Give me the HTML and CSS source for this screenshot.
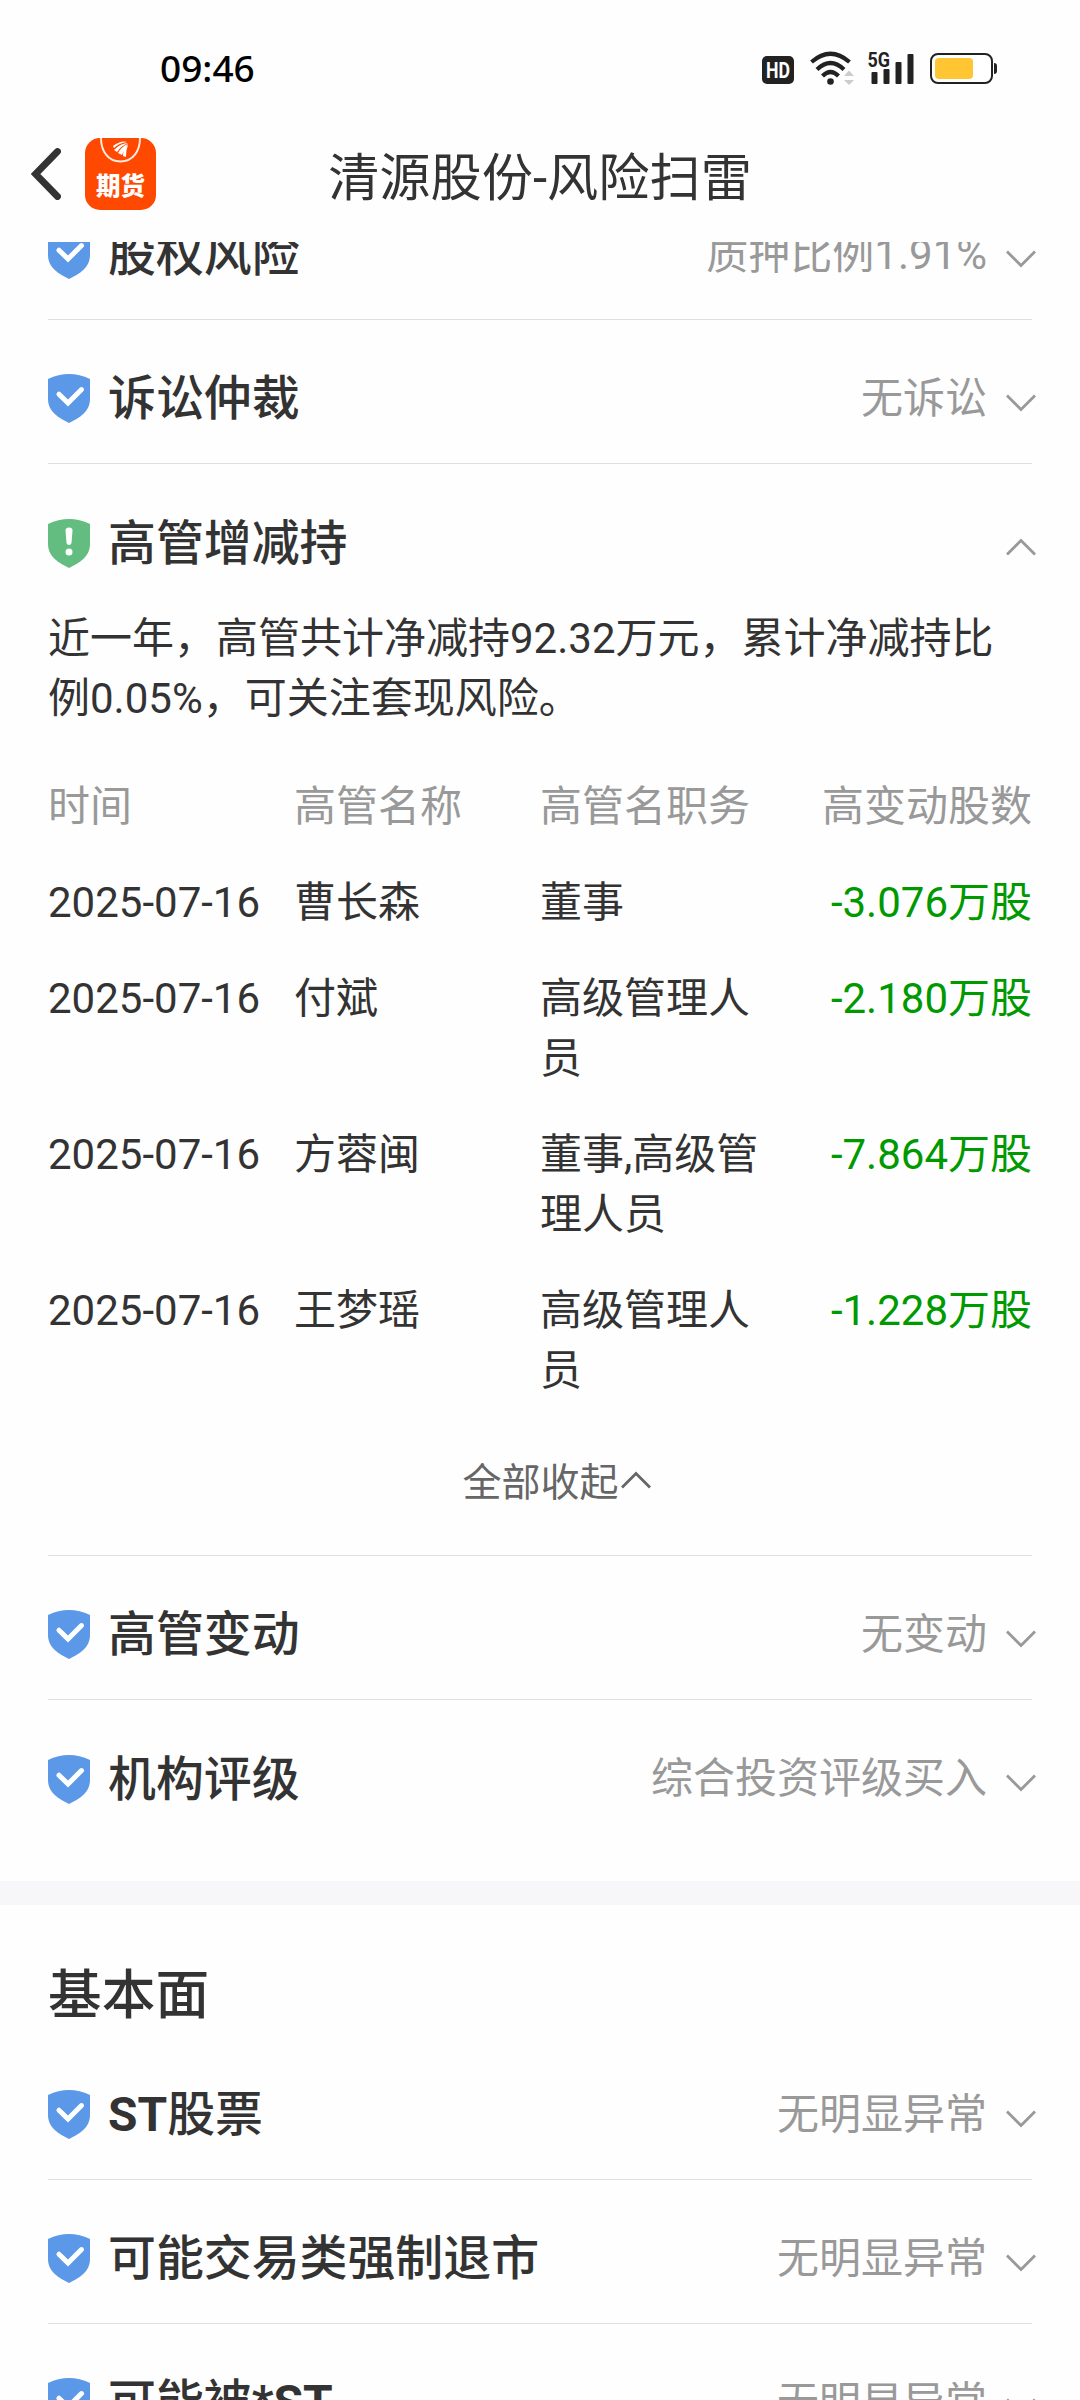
FILE: index.html
```html
<!DOCTYPE html>
<html lang="zh-CN">
<head>
<meta charset="utf-8">
<title>清源股份-风险扫雷</title>
<link rel="stylesheet" href="styles.css">
</head>
<body>
<svg class="defs" aria-hidden="true">
  <symbol id="shield-ok" viewBox="0 0 42 49">
    <path d="M0 5Q21-5 42 5V25C42 38 31 44 21 49C11 44 0 38 0 25Z" fill="#5c98e8"/>
    <path d="M11 20.200L20 29L33.500 15.600" fill="none" stroke="#fff" stroke-width="5" stroke-linecap="round"/>
  </symbol>
  <symbol id="shield-warn" viewBox="0 0 42 49">
    <path d="M0 5Q21-5 42 5V25C42 38 31 44 21 49C11 44 0 38 0 25Z" fill="#63bd80"/>
    <path d="M17.500 11.500Q17.500 8.500 21 8.500T24.500 11.500L23.500 24Q23 26 21 26T18.500 24Z" fill="#fff"/>
    <circle cx="21" cy="33" r="3.500" fill="#fff"/>
  </symbol>
  <symbol id="down" viewBox="0 0 30 18"><path d="M1 1.500L15 15.500L29 1.500" fill="none" stroke="currentColor" stroke-width="2.800"/></symbol>
  <symbol id="up" viewBox="0 0 30 18"><path d="M1 16.500L15 2.500L29 16.500" fill="none" stroke="currentColor" stroke-width="2.800"/></symbol>
</svg>
<div class="screen">
  <header class="top">
    <div class="status">
      <span class="time">09:46</span>
      <svg class="status-icons" viewBox="0 0 240 40">
        <rect x="2" y="6" width="32" height="28" rx="5" fill="#222"/>
        <text x="18" y="27.700" class="hd" textLength="24" lengthAdjust="spacingAndGlyphs">HD</text>
        <g fill="none" stroke="#222" stroke-width="4.200">
          <path d="M51.500 12Q70.500-4.500 89.500 12"/>
          <path d="M57 19.500Q70.500 6.500 84 19.500"/>
          <path d="M62.500 26Q70.500 18 78.500 26"/>
        </g>
        <circle cx="70.500" cy="31.500" r="3.300" fill="#222"/>
        <path d="M84 26L89 20.500L94 26ZM84 30L89 35L94 30Z" fill="#ccc"/>
        <text x="107.500" y="17.300" class="net" textLength="22.500" lengthAdjust="spacingAndGlyphs">5G</text>
        <g fill="#222">
          <rect x="111.500" y="22" width="6" height="12" rx="1"/><rect x="123.500" y="19" width="6" height="15" rx="1"/>
          <rect x="135.500" y="12" width="6" height="22" rx="1"/><rect x="147.500" y="4" width="6" height="30" rx="1"/>
          <path d="M234 13Q237 13 237 16V21Q237 24 234 24Z"/>
        </g>
        <rect x="171" y="4" width="61" height="29" rx="7" fill="#fff" stroke="#222" stroke-width="2"/>
        <rect x="175" y="8" width="38" height="21" rx="4" fill="#ffc533"/>
      </svg>
    </div>
    <div class="nav">
      <svg class="back" viewBox="0 0 30 52"><path d="M26.500 3.500L4.500 26L26.500 48.500" fill="none" stroke="#333" stroke-width="6.800" stroke-linecap="round"/></svg>
      <div class="app">
        <svg class="app-mark" viewBox="0 0 71 32">
          <path d="M16 0C16 13 23 23.500 35.500 23.500S55 13 55 0" fill="none" stroke="#ffe8dc" stroke-width="2"/>
          <path d="M28 8Q36 2 42 4Q34 5 29 10ZM29 12Q36 5 43 5Q36 8 32 14ZM33 15Q37 8 43 6Q39 11 37 17ZM38 18Q38 11 43 7Q41 12 41 19Z" fill="#fff"/>
        </svg>
        <span class="app-name">期货</span>
      </div>
      <h1 class="title">清源股份-风险扫雷</h1>
      <span></span>
    </div>
  </header>
  <main class="content">
    <section class="group first">
      <div class="row"><svg class="shield"><use href="#shield-ok"/></svg><b class="name">股权风险</b><span class="value">质押比例1.91%</span><svg class="arrow"><use href="#down"/></svg></div>
      <div class="row"><svg class="shield"><use href="#shield-ok"/></svg><b class="name">诉讼仲裁</b><span class="value">无诉讼</span><svg class="arrow"><use href="#down"/></svg></div>
      <div class="block">
        <div class="row open"><svg class="shield"><use href="#shield-warn"/></svg><b class="name">高管增减持</b><span class="value"></span><svg class="arrow"><use href="#up"/></svg></div>
        <p class="summary">近一年，高管共计净减持92.32万元，累计净减持比例0.05%，可关注套现风险。</p>
        <div class="table">
          <div class="tr head"><span>时间</span><span>高管名称</span><span>高管名职务</span><span class="num">高变动股数</span></div>
          <div class="tr"><span>2025-07-16</span><span>曹长森</span><span>董事</span><span class="num">-3.076万股</span></div>
          <div class="tr"><span>2025-07-16</span><span>付斌</span><span>高级管理人员</span><span class="num">-2.180万股</span></div>
          <div class="tr"><span>2025-07-16</span><span>方蓉闽</span><span>董事,高级管理人员</span><span class="num">-7.864万股</span></div>
          <div class="tr"><span>2025-07-16</span><span>王梦瑶</span><span>高级管理人员</span><span class="num">-1.228万股</span></div>
        </div>
        <div class="collapse">全部收起<svg class="arrow"><use href="#up"/></svg></div>
      </div>
      <div class="row"><svg class="shield"><use href="#shield-ok"/></svg><b class="name">高管变动</b><span class="value">无变动</span><svg class="arrow"><use href="#down"/></svg></div>
      <div class="row last"><svg class="shield"><use href="#shield-ok"/></svg><b class="name">机构评级</b><span class="value">综合投资评级买入</span><svg class="arrow"><use href="#down"/></svg></div>
    </section>
    <section class="group">
      <h2 class="heading">基本面</h2>
      <div class="row"><svg class="shield"><use href="#shield-ok"/></svg><b class="name"><span class="latin">ST</span>股票</b><span class="value">无明显异常</span><svg class="arrow"><use href="#down"/></svg></div>
      <div class="row"><svg class="shield"><use href="#shield-ok"/></svg><b class="name">可能交易类强制退市</b><span class="value">无明显异常</span><svg class="arrow"><use href="#down"/></svg></div>
      <div class="row"><svg class="shield"><use href="#shield-ok"/></svg><b class="name">可能被<span class="latin">*ST</span></b><span class="value">无明显异常</span><svg class="arrow"><use href="#down"/></svg></div>
    </section>
  </main>
</div>
</body>
</html>
```

FILE: styles.css
```css
* { box-sizing: border-box; }
body { margin: 0; background: #fefefe; color: #333; font-family: Roboto, "Noto Sans CJK SC", sans-serif; }
.defs { display: none; }
.screen { width: 1080px; height: 2400px; overflow: hidden; display: flex; flex-direction: column; }
.top { height: 242px; flex: none; }
.status { height: 132px; padding: 50px 80px 0 160px; display: flex; justify-content: space-between; align-items: flex-start; }
.time { font: 500 37px/40px "Noto Sans", sans-serif; color: #000; margin-top: -2px; }
.status-icons { width: 240px; height: 40px; }
.hd { font: 700 21.6px Roboto, sans-serif; fill: #fff; text-anchor: middle; }
.net { font: 700 21px Roboto, sans-serif; fill: #222; }
.nav { height: 84px; padding: 0 0 0 31px; display: grid; grid-template-columns: 54px 71px 1fr 156px; align-items: center; }
.back { width: 30px; height: 52px; }
.app { width: 71px; height: 72px; border-radius: 15px; background: #ff4800; overflow: hidden; display: flex; flex-direction: column; align-items: center; }
.app-mark { width: 71px; height: 32px; flex: none; }
.app-name { font-size: 24.5px; line-height: 34px; font-weight: 900; color: #fff; }
.title { margin: 0; padding-top: 9px; text-align: center; font-size: 51.2px; line-height: 75px; font-weight: 400; }
.content { flex: 1; min-height: 0; overflow: hidden; }
.group { padding: 0 48px; }
.first { margin-top: -66px; border-bottom: 24px solid #f7f7fa; }
.row { height: 144px; padding-top: 14px; display: flex; align-items: center; border-bottom: 1px solid #dfdfdf; }
.shield { width: 42px; height: 49px; flex: none; margin-right: 18px; }
.name { font-size: 47.9px; line-height: 72px; font-weight: 500; white-space: nowrap; padding-top: 1px; }
.latin { font-weight: 700; }
.value { flex: 1; text-align: right; font-size: 42px; line-height: 60px; color: #999; }
.arrow { width: 30px; height: 18px; flex: none; color: #999; }
.row .arrow { margin: 8px -4px 0 19px; }
.block { border-bottom: 1px solid #dfdfdf; height: 1092px; }
.open { border-bottom: 0; }
.summary { margin: 0; padding-top: 1px; font-size: 42px; line-height: 60px; }
.table { padding-top: 12px; }
.tr { display: grid; grid-template-columns: repeat(4, 246px); padding: 36px 0 0; font-size: 42px; line-height: 60px; }
.head { color: #999; }
.num { text-align: right; color: #090; }
.head .num { color: #999; }
.collapse { display: flex; justify-content: center; align-items: center; padding-top: 52px; padding-left: 33px; font-size: 39px; line-height: 60px; color: #666; }
.collapse .arrow { color: #666; margin: -6px 0 0 2px; }
.last { border-bottom: 0; height: 181px; padding-bottom: 37px; }
.heading { margin: 0; padding-top: 52px; height: 131px; font-size: 53.7px; line-height: 78px; font-weight: 500; }
```
